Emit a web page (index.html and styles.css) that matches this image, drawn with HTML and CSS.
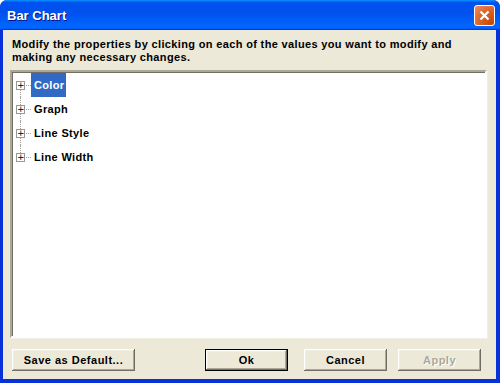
FILE: index.html
```html
<!DOCTYPE html>
<html lang="en">
<head>
    <meta charset="UTF-8">
    <title>Bar Chart</title>
    <link rel="stylesheet" href="styles.css">
</head>
<body>
    <div class="window">
        <div class="title-bar">
            <span class="title">Bar Chart</span>
            <button class="close-btn" aria-label="Close">
                <svg width="11" height="11" viewBox="0 0 11 11">
                    <path d="M1.5 1.5 L9.5 9.5 M9.5 1.5 L1.5 9.5" stroke="#fff" stroke-width="2.2" fill="none"/>
                </svg>
            </button>
        </div>

        <div class="window-body">
            <p class="hint">Modify the properties by clicking on each of the values you want to modify and making any necessary changes.</p>

            <ul class="tree">
                <li class="tree-item">
                    <span class="toggle">+</span><span class="branch"></span><span class="label selected">Color</span>
                </li>
                <li class="tree-item">
                    <span class="toggle">+</span><span class="branch"></span><span class="label">Graph</span>
                </li>
                <li class="tree-item">
                    <span class="toggle">+</span><span class="branch"></span><span class="label">Line Style</span>
                </li>
                <li class="tree-item">
                    <span class="toggle">+</span><span class="branch"></span><span class="label">Line Width</span>
                </li>
            </ul>

            <div class="buttons">
                <button class="btn btn-wide">Save as Default...</button>
                <div class="spacer"></div>
                <button class="btn btn-default">Ok</button>
                <button class="btn">Cancel</button>
                <button class="btn" disabled>Apply</button>
            </div>
        </div>
    </div>
</body>
</html>
```

FILE: styles.css
```css
html, body {
    margin: 0;
    padding: 0;
    background-color: #ffffff;
}

body {
    font-family: Tahoma, "Liberation Sans", Arial, sans-serif;
    font-size: 11px;
    font-weight: bold;
    letter-spacing: 0.35px;
}

.window {
    width: 500px;
    height: 383px;
    display: flex;
    flex-direction: column;
    background-color: #0831d9;
    border-radius: 7px 7px 0 0;
    overflow: hidden;
}

.title-bar {
    height: 30px;
    flex-shrink: 0;
    display: flex;
    align-items: center;
    padding: 0 5px 0 7px;
    background: linear-gradient(180deg, #0997ff, #0053ee 8%, #0050ee 40%, #0066ff 88%, #0066ff 93%, #005bff 95%, #003dd7 96%, #003dd7);
}

.title {
    flex: 1;
    color: #ffffff;
    font-size: 13px;
    font-weight: bold;
    letter-spacing: 0;
    text-shadow: 1px 1px #0f1089;
    padding-top: 1px;
}

.close-btn {
    width: 21px;
    height: 21px;
    padding: 0;
    display: flex;
    align-items: center;
    justify-content: center;
    border: 1px solid #ffffff;
    border-radius: 3px;
    background: radial-gradient(circle at 90% 90%, #cc4600 0%, #dc6527 55%, #f08e64 100%);
    margin-top: 1px;
}

.window-body {
    flex: 1;
    display: flex;
    flex-direction: column;
    margin: 0 4px 4px 3px;
    background-color: #ece9d8;
}

.hint {
    margin: 8px 10px 0 9px;
    line-height: 13px;
    color: #000000;
}

.tree {
    flex: 1;
    list-style: none;
    margin: 6px 9px 0 7px;
    padding: 1px 0 0 0;
    background-color: #ffffff;
    border: 2px solid;
    border-color: #aca899 #ffffff #ffffff #aca899;
    box-shadow: inset 1px 1px #716f64, 1px 1px #f1efe2;
}

.tree-item {
    position: relative;
    height: 24px;
    display: flex;
    align-items: center;
    padding-left: 4px;
}

.tree-item::before {
    content: "";
    position: absolute;
    left: 8px;
    top: 0;
    bottom: 0;
    border-left: 1px dotted #a0a0a0;
}

.tree-item:first-child::before {
    top: 12px;
}

.tree-item:last-child::before {
    bottom: 12px;
}

.toggle {
    position: relative;
    z-index: 1;
    width: 7px;
    height: 7px;
    border: 1px solid #919b9c;
    background-color: #ffffff;
    font-family: "DejaVu Sans", sans-serif;
    font-size: 9px;
    font-weight: normal;
    letter-spacing: 0;
    line-height: 7px;
    text-align: center;
    color: #000000;
}

.branch {
    width: 5px;
    margin-left: 1px;
    border-top: 1px dotted #a0a0a0;
}

.label {
    height: 24px;
    line-height: 24px;
    padding: 0 2px 0 3px;
    color: #000000;
}

.label.selected {
    background-color: #316ac5;
    color: #ffffff;
}

.buttons {
    display: flex;
    padding: 11px 15px 8px 9px;
}

.spacer {
    flex: 1;
}

.btn {
    width: 83px;
    height: 22px;
    margin-left: 11px;
    font-family: inherit;
    font-size: 11px;
    font-weight: bold;
    letter-spacing: 0.5px;
    color: #000000;
    background-color: #ece9d8;
    border: none;
    box-shadow: inset -1px -1px #716f64, inset 1px 1px #ffffff, inset -2px -2px #aca899, inset 2px 2px #f1efe2;
}

.btn-wide {
    width: 123px;
    margin-left: 0;
}

.btn-default {
    border: 1px solid #000000;
    margin-right: 5px;
}

.btn:disabled {
    color: #aca899;
    text-shadow: 1px 1px #ffffff;
}
```
